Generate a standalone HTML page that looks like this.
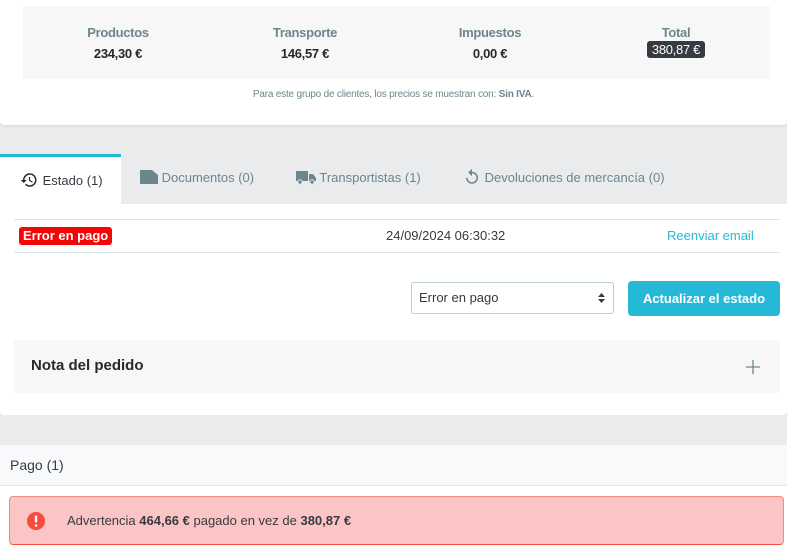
<!DOCTYPE html>
<html><head><meta charset="utf-8"><style>
*{box-sizing:border-box;margin:0;padding:0}
body{width:787px;height:558px;overflow:hidden;background:#eaebec;font-family:"Liberation Sans",sans-serif;color:#363a41;position:relative}
.abs{position:absolute}
.card1{left:0;top:0;width:787px;height:125px;background:#fff;border-radius:0 0 4px 4px;box-shadow:0 1px 2px rgba(0,0,0,.08)}
.sum{left:23px;top:6px;width:747px;height:73px;background:#f7f7f7}
.col{position:absolute;top:19px;width:150px;text-align:center}
.col .h{font-size:13px;font-weight:bold;color:#6c868e;letter-spacing:-.3px}
.col .v{font-size:13px;font-weight:bold;color:#25292e;margin-top:6px;letter-spacing:-.3px}
.col .v.tot{display:inline-block;background:#363a41;color:#fff;font-weight:normal;padding:1px 5px;border-radius:3px;margin-top:1px}
.note{top:89px;left:0;width:787px;text-align:center;font-size:10px;color:#6c868e;letter-spacing:-.2px}
.tabbar{left:0;top:154px;width:787px;height:50px;background:#eaebec}
.tab{position:absolute;top:0;height:50px;font-size:13px;color:#6c868e;line-height:48px}
.card2{left:0;top:204px;width:787px;height:211px;background:#fff;border-radius:0 0 4px 4px}
.row{left:14px;top:219px;width:766px;height:34px;border-top:1px solid #dbe6e9;border-bottom:1px solid #dbe6e9}
.badge{left:19px;top:227px;height:18px;background:#f20606;color:#fff;font-weight:bold;font-size:13px;padding:0 4px;line-height:18px;border-radius:3px}
.sel{left:411px;top:282px;width:203px;height:32px;border:1px solid #bbcdd2;border-radius:3px;font-size:13px;padding-left:7px;line-height:30px;background:#fff}
.btn{left:628px;top:281px;width:152px;height:35px;background:#25b9d7;border-radius:4px;color:#fff;font-weight:bold;font-size:13px;text-align:center;line-height:35px}
.nota{left:14px;top:340px;width:766px;height:53px;background:#f7f7f7}
.pago{left:0;top:445px;width:787px;height:113px;background:#fff}
.ph{left:0;top:445px;width:787px;height:41px;background:#f8f9fa;border-bottom:1px solid #dfe6e8;font-size:14px;padding-left:10px;line-height:41px}
.alert{left:9px;top:496px;width:775px;height:49px;background:#fcc5c5;border:1px solid #f38b82;border-bottom-color:#f54c3e;border-radius:4px;font-size:13px;line-height:47px;padding-left:57px;color:#363a41}
</style></head><body>
<div class="abs card1"></div>
<div class="abs sum">
 <div class="col" style="left:20px"><div class="h">Productos</div><div class="v">234,30 €</div></div>
 <div class="col" style="left:207px"><div class="h">Transporte</div><div class="v">146,57 €</div></div>
 <div class="col" style="left:392px"><div class="h">Impuestos</div><div class="v">0,00 €</div></div>
 <div class="col" style="left:578px"><div class="h">Total</div><div class="v tot">380,87 €</div></div>
</div>
<div class="abs note">Para este grupo de clientes, los precios se muestran con: <b>Sin IVA</b>.</div>

<div class="abs tabbar">
 <div class="tab" style="left:0;width:121px;background:#fff;border-top:3px solid #25b9d7;color:#363a41;padding-left:19px;line-height:48px">
  <svg width="20" height="18" viewBox="0 0 24 24" style="vertical-align:-4px"><path d="M13 3a9 9 0 0 0-9 9H1l4 4 4-4H6a7 7 0 1 1 2.05 4.95l-1.42 1.42A9 9 0 1 0 13 3zm-1 5v5l4.25 2.52.77-1.28-3.52-2.09V8z" fill="#25292e"/></svg> Estado (1)</div>
 <div class="tab" style="left:140px"><svg width="18" height="16" viewBox="0 0 18 16" style="vertical-align:-2px"><path d="M0 2h12l6 5v9H0z" fill="#6c868e"/></svg> Documentos (0)</div>
 <div class="tab" style="left:296px"><svg width="20" height="16" viewBox="0 0 20 16" style="vertical-align:-3px"><path d="M0 2h12v10H0zM13 5h4l3 4v3h-7z" fill="#6c868e"/><circle cx="4" cy="13" r="2.2" fill="#6c868e" stroke="#eaebec"/><circle cx="16" cy="13" r="2.2" fill="#6c868e" stroke="#eaebec"/></svg> Transportistas (1)</div>
 <div class="tab" style="left:463px"><svg width="18" height="18" viewBox="0 0 24 24" style="vertical-align:-4px"><path d="M12 5V1L7 6l5 5V7a6 6 0 1 1-6 6H4a8 8 0 1 0 8-8z" fill="#6c868e"/></svg> Devoluciones de mercancía (0)</div>
</div>
<div class="abs card2"></div>
<div class="abs row"></div>
<div class="abs badge">Error en pago</div>
<div class="abs" style="left:386px;top:228px;font-size:13px">24/09/2024 06:30:32</div>
<div class="abs" style="left:667px;top:228px;font-size:13px;color:#25b9d7">Reenviar email</div>
<div class="abs sel">Error en pago</div>
<svg class="abs" style="left:598px;top:293px" width="7" height="10" viewBox="0 0 7 10"><path d="M3.5 0L7 4H0zM3.5 10L0 6h7z" fill="#363a41"/></svg>
<div class="abs btn">Actualizar el estado</div>
<div class="abs nota"><div style="position:absolute;left:17px;top:17px;font-size:15px;font-weight:bold;color:#25292e">Nota del pedido</div>
<svg style="position:absolute;left:732px;top:20px" width="14" height="14" viewBox="0 0 14 14"><path d="M7 0v14M0 7h14" stroke="#6c868e" stroke-width="1.3"/></svg></div>
<div class="abs pago"></div>
<div class="abs ph">Pago (1)</div>
<div class="abs alert">Advertencia <b>464,66 €</b> pagado en vez de <b>380,87 €</b>
 <svg class="abs" style="left:16px;top:14px" width="20" height="20" viewBox="0 0 20 20"><circle cx="10" cy="10" r="9" fill="#f54c3e"/><rect x="8.8" y="4.5" width="2.4" height="7" rx="1" fill="#fff"/><circle cx="10" cy="14.5" r="1.3" fill="#fff"/></svg></div>
</body></html>
